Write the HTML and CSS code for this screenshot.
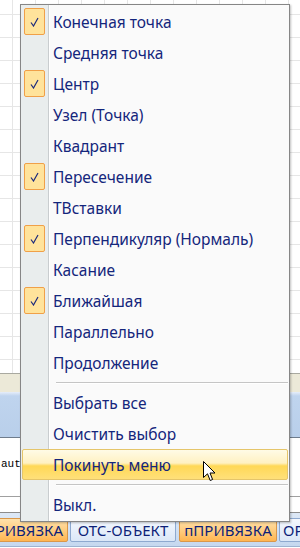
FILE: index.html
```html
<!DOCTYPE html>
<html lang="ru">
<head>
    <meta charset="UTF-8">
    <meta name="viewport" content="width=device-width, initial-scale=1.0">
    <title>Объектная привязка</title>
    <link rel="stylesheet" href="styles.css">
</head>
<body>

    <div class="app">
        <!-- drawing area behind the menu -->
        <div class="drawing"></div>
        <div class="ribbon-beige"></div>
        <div class="ribbon-blue"></div>
        <div class="cmdline"><span class="cmd-text">aut</span></div>
        <div class="cmdline-low"></div>

        <!-- status bar -->
        <div class="statusbar">
            <span class="sbtn sbtn-on sbtn-first">ПРИВЯЗКА</span>
            <span class="sbtn sbtn-otc">ОТС-ОБЪЕКТ</span>
            <span class="sbtn sbtn-on sbtn-dyn">пПРИВЯЗКА</span>
            <span class="sbtn sbtn-last">ОРТО</span>
        </div>

        <!-- osnap context menu -->
        <div class="menu">
            <div class="item checked"><span class="box"><svg width="9" height="10" viewBox="0 0 9 10"><path d="M1 5.5 L3.5 9 L8 1" fill="none" stroke="#1c2a7c" stroke-width="1.2"/></svg></span>Конечная точка</div>
            <div class="item"><span class="box"></span>Средняя точка</div>
            <div class="item checked"><span class="box"><svg width="9" height="10" viewBox="0 0 9 10"><path d="M1 5.5 L3.5 9 L8 1" fill="none" stroke="#1c2a7c" stroke-width="1.2"/></svg></span>Центр</div>
            <div class="item"><span class="box"></span>Узел (Точка)</div>
            <div class="item"><span class="box"></span>Квадрант</div>
            <div class="item checked"><span class="box"><svg width="9" height="10" viewBox="0 0 9 10"><path d="M1 5.5 L3.5 9 L8 1" fill="none" stroke="#1c2a7c" stroke-width="1.2"/></svg></span>Пересечение</div>
            <div class="item"><span class="box"></span>ТВставки</div>
            <div class="item checked"><span class="box"><svg width="9" height="10" viewBox="0 0 9 10"><path d="M1 5.5 L3.5 9 L8 1" fill="none" stroke="#1c2a7c" stroke-width="1.2"/></svg></span>Перпендикуляр (Нормаль)</div>
            <div class="item"><span class="box"></span>Касание</div>
            <div class="item checked"><span class="box"><svg width="9" height="10" viewBox="0 0 9 10"><path d="M1 5.5 L3.5 9 L8 1" fill="none" stroke="#1c2a7c" stroke-width="1.2"/></svg></span>Ближайшая</div>
            <div class="item"><span class="box"></span>Параллельно</div>
            <div class="item"><span class="box"></span>Продолжение</div>
            <div class="sep"></div>
            <div class="item"><span class="box"></span>Выбрать все</div>
            <div class="item"><span class="box"></span>Очистить выбор</div>
            <div class="item hover"><span class="box"></span>Покинуть меню</div>
            <div class="sep"></div>
            <div class="item"><span class="box"></span>Выкл.</div>
        </div>

        <!-- mouse pointer -->
        <svg class="pointer" width="13" height="21" viewBox="0 0 13 21">
            <path d="M0.5 0.5 L0.5 16.5 L4.5 12.8 L7.2 19.5 L9.6 18.5 L7 12 L12 12 Z" fill="#fff" stroke="#000" stroke-width="1"/>
        </svg>
    </div>

</body>
</html>
```

FILE: styles.css
```css
body {
    margin: 0;
    font-family: "Noto Sans", "Open Sans", sans-serif;
    background-color: #fff;
}

.app {
    position: relative;
    width: 300px;
    height: 548px;
    overflow: hidden;
}

/* background window */

.drawing {
    height: 373px;
    border-bottom: 1px solid #a9a9a0;
    background-color: #fff;
    background-image:
        linear-gradient(to right, #e6e6e6 1px, transparent 1px),
        linear-gradient(to bottom, #e6e6e6 1px, transparent 1px);
    background-size: 23px 23px;
    background-position: 12px 14px;
}

.ribbon-beige {
    height: 18px;
    background-color: #ece9d8;
}

.ribbon-blue {
    height: 45px;
    border-bottom: 1px solid #6f7c8c;
    background: linear-gradient(to bottom, #e6eefa 0, #bfd4ee 4px, #b9cfea 100%);
}

.cmdline {
    height: 58px;
    border-bottom: 1px solid #a0a0a0;
    background-color: #fff;
    display: flex;
    align-items: center;
}

.cmd-text {
    font-family: "Liberation Mono", monospace;
    font-size: 11px;
    color: #000;
    padding-left: 1px;
    margin-bottom: 6px;
}

.cmdline-low {
    height: 15px;
    border-bottom: 1px solid #8c8c8c;
    background-color: #fff;
}

.statusbar {
    height: 34px;
    display: flex;
    align-items: flex-start;
    padding-top: 5px;
    box-sizing: border-box;
    background: linear-gradient(to bottom, #dde8f6, #c5d8ef);
    border-bottom: 1px solid #9db3d0;
}

.sbtn {
    flex: none;
    height: 24px;
    display: flex;
    align-items: center;
    justify-content: center;
    box-sizing: border-box;
    border: 1px solid #8ea9cf;
    border-radius: 2px;
    background: linear-gradient(to bottom, #f4f8fe, #dbe7f7);
    font-size: 15px;
    color: #0d1f78;
    white-space: nowrap;
    overflow: hidden;
}

.sbtn-on {
    border-color: #d9974a;
    background: linear-gradient(to bottom, #ffe2ac, #ffc978 60%, #ffb550);
}

.sbtn-first {
    width: 80px;
    margin-left: -12px;
    justify-content: flex-end;
    padding-right: 4px;
}

.sbtn-otc {
    width: 106px;
    margin-left: 2px;
}

.sbtn-dyn {
    width: 98px;
    margin-left: 3px;
}

.sbtn-last {
    width: 60px;
    margin-left: 2px;
    justify-content: flex-start;
    padding-left: 3px;
}

/* context menu */

.menu {
    position: absolute;
    left: 20px;
    top: 4px;
    width: 270px;
    box-sizing: border-box;
    padding: 1px 0;
    border: 1px solid #868686;
    box-shadow: 1px 1px 2px rgba(0, 0, 0, 0.25);
    background:
        linear-gradient(to right, #e9eded 27px, #c9cdcf 27px, #c9cdcf 28px, #ffffff 28px, #ffffff 29px, #fafafa 29px);
}

.item {
    height: 31px;
    display: flex;
    align-items: center;
    margin: 0 1px;
    font-size: 15.5px;
    color: #14267c;
    white-space: nowrap;
}

.box {
    width: 21px;
    height: 27px;
    margin: 0 8px 0 2px;
    box-sizing: border-box;
    display: flex;
    align-items: center;
    justify-content: center;
    border: 1px solid transparent;
    border-radius: 2px;
}

.checked .box {
    border-color: #f0a048;
    background-color: #ffe39b;
}

.hover {
    border: 1px solid #e5c56a;
    border-radius: 2px;
    box-sizing: border-box;
    background: linear-gradient(to bottom, #fffbe6 0, #fff1c2 45%, #ffd856 55%, #ffe07a 100%);
}

.hover .box {
    margin-left: 1px;
}

.sep {
    height: 9px;
    display: flex;
    align-items: center;
    padding-left: 35px;
    padding-right: 1px;
}

.sep::after {
    content: "";
    flex: 1;
    height: 1px;
    background-color: #c5c5c5;
    box-shadow: 0 1px 0 #ffffff;
}

.pointer {
    position: absolute;
    left: 203px;
    top: 461px;
}
```
